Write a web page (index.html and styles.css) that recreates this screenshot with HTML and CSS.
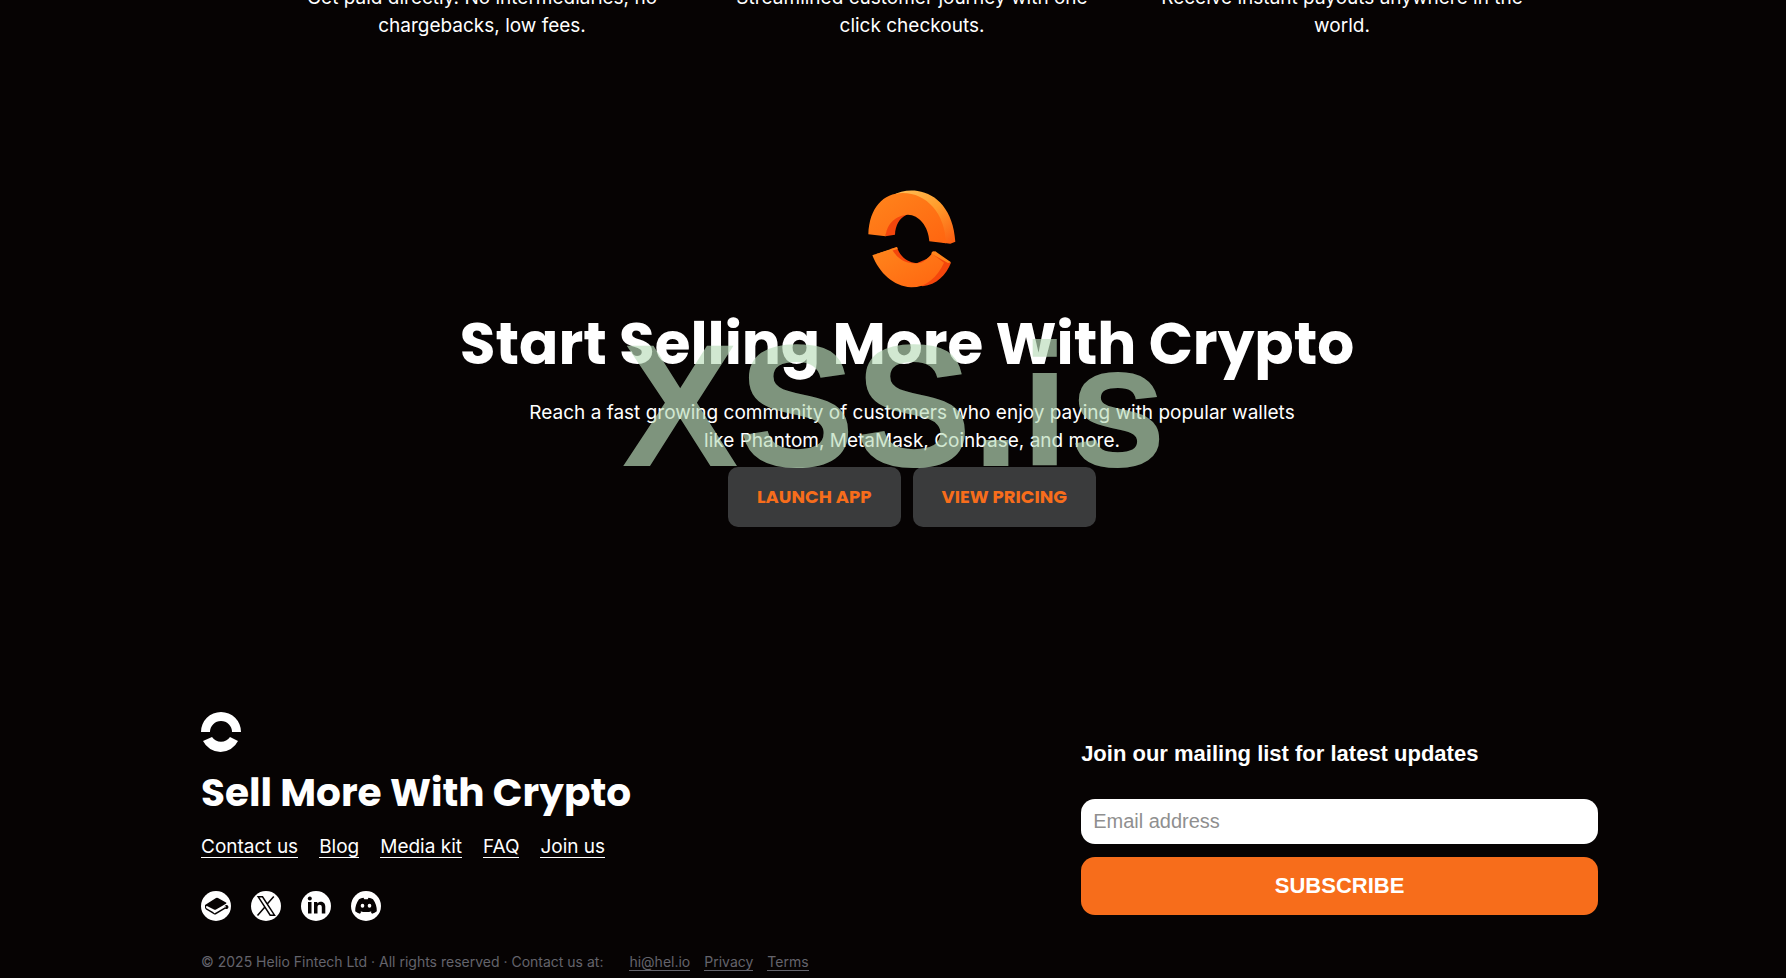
FILE: index.html
```html
<!doctype html>
<html lang="en">
<head>
    <meta charset="UTF-8">
    <title>Helio</title>
    <link rel="stylesheet" href="styles.css">
</head>
<body>
<main class="main">
    <section class="features">
        <p>Get paid directly. No intermediaries, no chargebacks, low fees.</p>
        <p>Streamlined customer journey with one click checkouts.</p>
        <p>Receive instant payouts anywhere in the world.</p>
    </section>

    <section class="cta">
        <svg class="cta-logo" viewBox="56 59 264 294" aria-hidden="true">
            <defs>
                <linearGradient id="side" x1="0" y1="0" x2="1" y2="1">
                    <stop offset="0" stop-color="#ffc15a"/>
                    <stop offset="0.5" stop-color="#ff9d2c"/>
                    <stop offset="1" stop-color="#fb5a10"/>
                </linearGradient>
                <linearGradient id="face" x1="0" y1="0" x2="1" y2="1">
                    <stop offset="0" stop-color="#ff851c"/>
                    <stop offset="1" stop-color="#ff6510"/>
                </linearGradient>
            </defs>
            <path fill="url(#side)" d="M130 76C150 62 180 58 205 62C262 70 312 120 318 214L303 220L280 217C278 140 220 84 130 76Z"/>
            <path fill="#f4460c" d="M108 198C110 158 136 130 172 133C150 143 138 165 137 193Z"/>
            <path fill="url(#face)" d="M57 192C60 112 102 68 160 68C232 68 288 130 290 219L240 213C238 168 208 133 176 133C142 134 112 158 109 198Z"/>
            <path fill="#f4460c" d="M123 236L143 230C150 256 172 275 202 279L240 262L252 243L305 277C290 315 262 342 220 348L160 320Z"/>
            <path fill="url(#face)" d="M69 255L127 237C146 267 170 282 205 279C222 278 235 264 248 250L284 277C264 322 228 352 185 351C132 348 90 308 69 255Z"/>
            <path fill="#ff851c" d="M248 244L258 243L305 276L296 278L246 250Z"/>
            <path fill="#ff851c" d="M69 255L143 230L145 236L127 241Z"/>
        </svg>
        <h1>Start Selling More With Crypto</h1>
        <p class="cta-text">Reach a fast growing community of customers who enjoy paying with popular wallets like Phantom, MetaMask, Coinbase, and more.</p>
        <div class="cta-buttons">
            <button type="button">LAUNCH APP</button>
            <button type="button">VIEW PRICING</button>
        </div>
        <div class="watermark">XSS.is</div>
    </section>
</main>

<footer class="footer">
    <div class="footer-left">
        <svg class="footer-logo" viewBox="0 0 40 40" aria-hidden="true">
            <path fill="#fff" d="M0 20a20 20 0 0 1 40 0h-9a11 11 0 0 0-22 0zM2 29l9-4a11 11 0 0 0 18 0l8 4a19.500 19.500 0 0 1-35 0z"/>
        </svg>
        <h2>Sell More With Crypto</h2>
        <nav class="links">
            <a href="#">Contact us</a>
            <a href="#">Blog</a>
            <a href="#">Media kit</a>
            <a href="#">FAQ</a>
            <a href="#">Join us</a>
        </nav>
        <div class="social">
            <a href="#" aria-label="GitBook">
                <svg viewBox="0 0 30 30">
                    <circle cx="15" cy="15" r="15" fill="#fff"/>
                    <path fill="#060303" d="M4 14L15 7q1-.6 2 0l8 4.500q1 .6 0 1.200L15 18.500q-1 .6-2 0L6 15q-1 0-1 1 0 1 1 1.500l7 4q1 .5 2 0l8.500-5a2 2 0 1 1 .8 1.200L15.500 23q-1.500 1-3 0L5 18.500Q3.500 17 4 14z"/>
                    <circle cx="13.500" cy="21.500" r="0.800" fill="#fff"/>
                    <circle cx="24" cy="15.800" r="0.800" fill="#fff"/>
                </svg>
            </a>
            <a href="#" aria-label="X">
                <svg viewBox="0 0 30 30">
                    <circle cx="15" cy="15" r="15" fill="#fff"/>
                    <path fill="none" stroke="#060303" stroke-width="1.500" d="M7.200 5.800h4.300l12 18.400h-4.300zM22.800 5.500l-7 8M13.500 16.500l-7 8"/>
                </svg>
            </a>
            <a href="#" aria-label="LinkedIn">
                <svg viewBox="0 0 30 30">
                    <circle cx="15" cy="15" r="15" fill="#fff"/>
                    <circle cx="8.800" cy="7.500" r="2" fill="#060303"/>
                    <path fill="#060303" d="M7 11h3.500v11.500H7zM13 11h3.300v1.600c2-3 8-2.600 8 3v6.900h-3.500v-6.300c0-3.200-4.300-3-4.300 0v6.300H13z"/>
                </svg>
            </a>
            <a href="#" aria-label="Discord">
                <svg viewBox="0 0 30 30">
                    <circle cx="15" cy="15" r="15" fill="#fff"/>
                    <path fill="#060303" d="M12.500 6.800l.8 1.500q1.700-.3 3.400 0l.8-1.500q2.500.4 4.500 1.500 4 5.500 3.800 12-2 1.600-4.800 2.400l-1.300-2 1.400-.8q-6 2.400-12.200 0l1.400.8-1.300 2q-2.800-.8-4.800-2.400-.2-6.500 3.800-12 2-1.100 4.500-1.500z"/>
                    <ellipse cx="11.500" cy="14.800" rx="1.800" ry="2" fill="#fff"/>
                    <ellipse cx="18.500" cy="14.800" rx="1.800" ry="2" fill="#fff"/>
                </svg>
            </a>
        </div>
        <div class="copyright">
            <span>© 2025 Helio Fintech Ltd · All rights reserved · Contact us at:</span>
            <a href="#">hi@hel.io</a>
            <a href="#">Privacy</a>
            <a href="#">Terms</a>
        </div>
    </div>

    <form class="subscribe">
        <label for="email">Join our mailing list for latest updates</label>
        <input type="email" id="email" placeholder="Email address">
        <button type="submit">SUBSCRIBE</button>
    </form>
</footer>
</body>
</html>
```
FILE: styles.css
```css
* {
    margin: 0;
    padding: 0;
    box-sizing: border-box;
}

body {
    background: #060303;
    color: #fff;
    font: 19px/28px Inter, sans-serif;
    overflow: hidden;
}

a {
    color: inherit;
    text-decoration: none;
}

svg {
    display: block;
}

.main {
    padding-left: 38px;
    text-align: center;
}

.features {
    display: grid;
    grid-template-columns: repeat(3, 380px);
    justify-content: center;
    gap: 50px;
    margin-top: -16px;
}

.cta {
    position: relative;
    display: flex;
    flex-direction: column;
    align-items: center;
    margin-top: 150px;
}

.cta-logo {
    width: 88px;
    height: 98px;
}

.cta h1 {
    margin-top: 20px;
    padding-right: 10px;
    font-family: Poppins, Inter, sans-serif;
    font-size: 58px;
    line-height: 72px;
    font-weight: 700;
}

.cta-text {
    max-width: 800px;
    margin-top: 19px;
}

.cta-buttons {
    display: flex;
    gap: 12px;
    margin-top: 12px;
}

.cta-buttons button {
    height: 60px;
    padding: 0 29px;
    border: 0;
    border-radius: 10px;
    background: #3a3b3c;
    color: #f76d1b;
    font: 700 18px/24px Poppins, Inter, sans-serif;
}

/* stamped over the whole block */
.watermark {
    position: absolute;
    top: 116px;
    left: 50%;
    transform: translateX(-50%);
    margin-left: -18px;
    color: rgba(186, 221, 187, 0.67);
    font: 700 175px/200px "Liberation Sans", Arial, sans-serif;
    pointer-events: none;
}

.footer {
    display: flex;
    justify-content: space-between;
    align-items: flex-start;
    margin-top: 185px;
    padding: 0 188px 0 201px;
}

.footer-logo {
    width: 40px;
    height: 40px;
}

.footer h2 {
    margin-top: 16px;
    font-family: Poppins, Inter, sans-serif;
    font-size: 39px;
    line-height: 50px;
    font-weight: 700;
}

.links {
    display: flex;
    gap: 21px;
    margin-top: 16px;
}

.links a {
    height: 24px;
    line-height: 26px;
    border-bottom: 1px solid #fff;
}

.social {
    display: flex;
    gap: 20px;
    margin-top: 33px;
}

.social svg {
    width: 30px;
    height: 30px;
}

.copyright {
    display: flex;
    gap: 14px;
    margin-top: 30px;
    color: #64646c;
    font-size: 14px;
    line-height: 22px;
}

.copyright span {
    margin-right: 12px;
}

.copyright a {
    height: 20px;
    border-bottom: 1px solid #64646c;
}

.subscribe {
    display: flex;
    flex-direction: column;
    width: 37%;
    margin-top: 28px;
    font-family: "Liberation Sans", Arial, sans-serif;
}

.subscribe label {
    font-size: 22px;
    font-weight: 700;
}

.subscribe input {
    height: 45px;
    margin: 31px 0 13px;
    padding: 0 12px;
    border: 0;
    border-radius: 14px;
    background: #fff;
    font: 20px "Liberation Sans", Arial, sans-serif;
}

.subscribe input::placeholder {
    color: #8f8f8f;
}

.subscribe button {
    height: 58px;
    border: 0;
    border-radius: 14px;
    background: #f76d1b;
    color: #fff;
    font: 700 22px "Liberation Sans", Arial, sans-serif;
}
```
